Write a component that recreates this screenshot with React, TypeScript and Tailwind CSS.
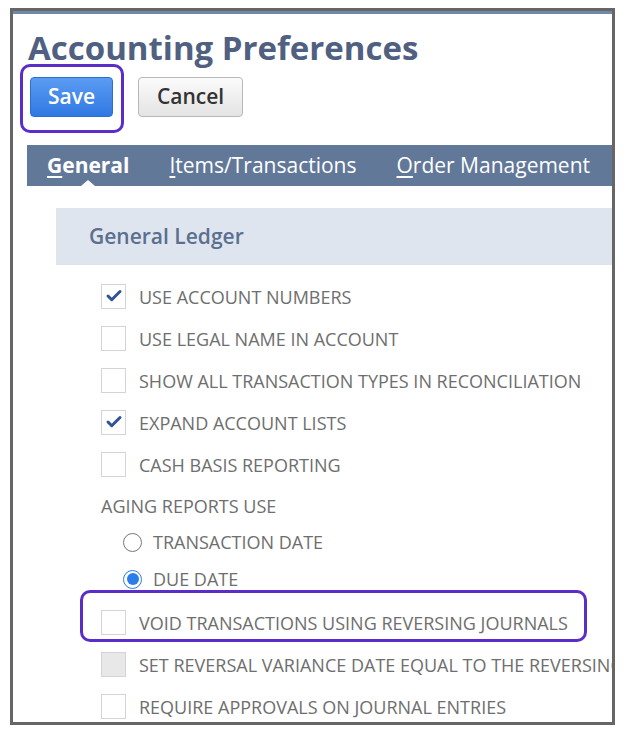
import { Check } from 'lucide-react';

const rows1 = [
  { label: 'USE ACCOUNT NUMBERS', checked: true },
  { label: 'USE LEGAL NAME IN ACCOUNT', checked: false },
  { label: 'SHOW ALL TRANSACTION TYPES IN RECONCILIATION', checked: false },
  { label: 'EXPAND ACCOUNT LISTS', checked: true },
  { label: 'CASH BASIS REPORTING', checked: false },
];

const Box = ({ checked, disabled }: { checked?: boolean; disabled?: boolean }) => (
  <div
    className={`flex h-[25px] w-[25px] shrink-0 items-center justify-center border border-[#d4d4d4] ${
      disabled ? 'bg-[#e8e8e8]' : 'bg-white'
    }`}
  >
    {checked && <Check className="h-[18px] w-[18px] text-[#2f5394]" strokeWidth={4} />}
  </div>
);

const Row = ({ label, checked, disabled }: { label: string; checked?: boolean; disabled?: boolean }) => (
  <div className="flex h-[42px] items-center gap-[13px] pl-[88px] whitespace-nowrap">
    <Box checked={checked} disabled={disabled} />
    <span className="pt-[2px] text-[18px] text-[#6e6e6e]">{label}</span>
  </div>
);

const App = () => {
  return (
    <div className="h-[734px] w-[626px] bg-white pl-[10px] pt-[8px] font-['Open_Sans',sans-serif]">
      <div className="relative h-[717px] w-[605px] overflow-hidden border-[3px] border-[#666]">
        <div className="h-[3px] bg-[#7088ab]" />

        {/* Header */}
        <div className="pl-[15px] pt-[14px]">
          <h1 className="text-[33px] leading-[40px] font-bold text-[#4f6081] whitespace-nowrap">Accounting Preferences</h1>
          <div className="mt-[9px] flex gap-[25px] pl-[2px]">
            <button className="h-[40px] w-[83px] rounded-[4px] border border-[#2c6fd0] bg-gradient-to-b from-[#5b9cf2] to-[#2f78e3] text-[21px] font-semibold text-white">
              Save
            </button>
            <button className="h-[40px] w-[105px] rounded-[4px] border border-[#b8b8b8] bg-gradient-to-b from-[#fbfbfb] to-[#e4e4e4] text-[21px] font-semibold text-[#333]">
              Cancel
            </button>
          </div>
        </div>

        {/* Tabs */}
        <div className="relative mt-[28px] ml-[14px] flex h-[41px] items-center bg-[#627899] pl-[20px] text-[21px] text-white whitespace-nowrap">
          <span className="font-bold">
            <span className="underline underline-offset-[3px]">G</span>eneral
          </span>
          <span className="ml-[40px]">
            <span className="underline underline-offset-[3px]">I</span>tems/Transactions
          </span>
          <span className="ml-[40px]">
            <span className="underline underline-offset-[3px]">O</span>rder Management
          </span>
          <div className="absolute bottom-0 left-[54px] h-0 w-0 border-x-[7px] border-b-[6px] border-x-transparent border-b-white" />
        </div>

        {/* Section */}
        <div className="mt-[22px] ml-[43px] flex h-[57px] items-center bg-[#dfe5ee] pl-[33px] text-[21px] font-semibold text-[#5b6f8f]">
          General Ledger
        </div>

        <div className="mt-[10px]">
          {rows1.map((r) => (
            <Row key={r.label} label={r.label} checked={r.checked} />
          ))}
          <div className="flex h-[42px] items-center pl-[88px] text-[18px] text-[#6e6e6e]">AGING REPORTS USE</div>
          <div className="flex h-[30px] items-center gap-[11px] pl-[110px] text-[18px] text-[#6e6e6e]">
            <div className="h-[19px] w-[19px] rounded-full border-[1.5px] border-[#777] bg-white" />
            <span>TRANSACTION DATE</span>
          </div>
          <div className="flex h-[44px] items-center gap-[11px] pl-[110px] text-[18px] text-[#6e6e6e]">
            <div className="flex h-[19px] w-[19px] items-center justify-center rounded-full border-[1.5px] border-[#2b7de9] bg-white">
              <div className="h-[12px] w-[12px] rounded-full bg-[#2b7de9]" />
            </div>
            <span>DUE DATE</span>
          </div>
          <Row label="VOID TRANSACTIONS USING REVERSING JOURNALS" />
          <Row label="SET REVERSAL VARIANCE DATE EQUAL TO THE REVERSING DATE" disabled />
          <Row label="REQUIRE APPROVALS ON JOURNAL ENTRIES" />
        </div>

        {/* annotation highlights */}
        <div className="absolute left-[7px] top-[53px] h-[69px] w-[104px] rounded-[10px] border-[3px] border-[#5a2dc8]" />
        <div className="absolute left-[67px] top-[579px] h-[52px] w-[507px] rounded-[10px] border-[3px] border-[#5a2dc8]" />
      </div>
    </div>
  );
};

export default App;
